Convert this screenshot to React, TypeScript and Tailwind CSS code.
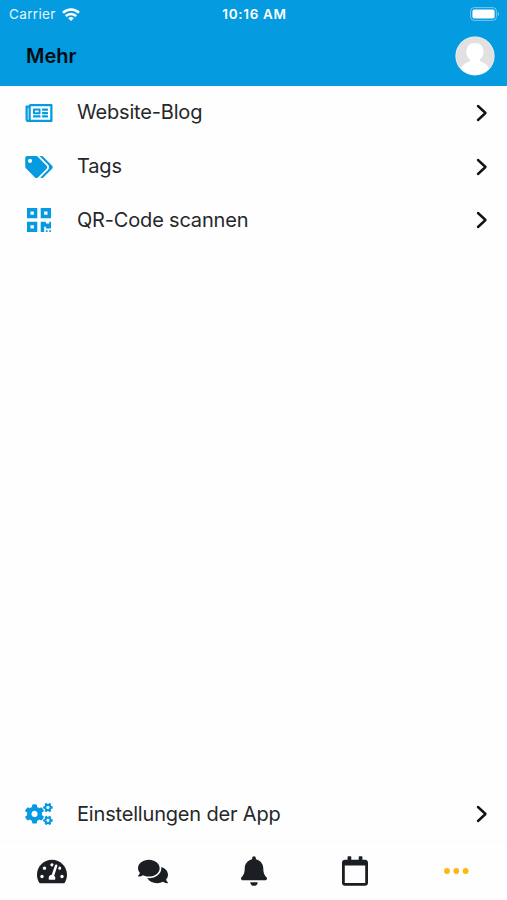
import type { ReactNode } from "react";
import {
    FaBell,
    FaCogs,
    FaComments,
    FaQrcode,
    FaRegCalendar,
    FaRegNewspaper,
    FaTachometerAlt,
    FaTags,
} from "react-icons/fa";

const menuItems = [
    { label: "Website-Blog", icon: <FaRegNewspaper className="w-7 h-6" /> },
    { label: "Tags", icon: <FaTags className="w-[28px] h-[22px]" /> },
    { label: "QR-Code scannen", icon: <FaQrcode className="w-6 h-[28px]" /> },
];

const WifiIcon = () => (
    <svg viewBox="0 0 18 13" className="w-[18px] h-[13px]" fill="none" stroke="#fff" strokeWidth="2.6">
        <path d="M1 4.8a11.4 11.4 0 0 1 16 0" />
        <path d="M3.800 8.100a7.400 7.400 0 0 1 10.400 0" />
        <path d="M9 13 6.200 10.300a4 4 0 0 1 5.600 0z" fill="#fff" stroke="none" />
    </svg>
);

const BatteryIcon = () => (
    <svg viewBox="0 0 30 14" className="w-[30px] h-[14px]">
        <rect x="0.6" y="0.6" width="25.8" height="12.8" rx="3.6" fill="none" stroke="#fff" strokeOpacity="0.45" />
        <rect x="2.4" y="2.4" width="22.2" height="9.2" rx="2" fill="#fff" />
        <path d="M27.8 4.8a2.6 2.6 0 0 1 0 4.4z" fill="#fff" fillOpacity="0.5" />
    </svg>
);

const Avatar = () => (
    <svg viewBox="0 0 40 40" className="w-10 h-10">
        <clipPath id="avatar-clip">
            <circle cx="20" cy="20" r="19" />
        </clipPath>
        <circle cx="20" cy="20" r="19.6" fill="#f4f4f4" />
        <g clipPath="url(#avatar-clip)">
            <rect width="40" height="40" fill="#e1e1e1" />
            <path
                d="M20 7c5.200 0 8.600 3.400 8.600 8.600 0 3.300-1.500 6.200-3.700 8v1.700c5 1.500 8.600 4.500 10 9.700V40H5v-5c1.400-5.200 5-8.200 10-9.700v-1.700c-2.200-1.800-3.700-4.700-3.700-8C11.300 10.400 14.800 7 20 7z"
                fill="#fff"
            />
        </g>
    </svg>
);

const Chevron = () => (
    <svg viewBox="0 0 12 18" className="w-3 h-[18px] text-[#111416]" fill="none">
        <path d="M2 2l7.5 7L2 16" stroke="currentColor" strokeWidth="2.4" strokeLinecap="round" strokeLinejoin="round" />
    </svg>
);

const MoreIcon = () => (
    <svg viewBox="0 0 25 6" className="w-[25px] h-1.5" fill="#fcb713">
        <circle cx="3" cy="3" r="2.9" />
        <circle cx="12.3" cy="3" r="2.9" />
        <circle cx="21.6" cy="3" r="2.9" />
    </svg>
);

const MenuRow = ({ icon, label }: { icon: ReactNode; label: string }) => (
    <button className="flex items-center w-full h-[53.7px] pl-[25px] pr-[19px] text-left">
        <span className="flex justify-center w-7 text-[#069be0]">{icon}</span>
        <span className="flex-1 ml-6 pb-px text-[20px] tracking-[-0.18px] text-[#25282b]">{label}</span>
        <Chevron />
    </button>
);

export default function App() {
    return (
        <div className="flex flex-col w-full h-[900px] bg-[#fefefe] font-['Inter','Liberation_Sans',sans-serif]">
            <header className="h-[86px] bg-[#049be0]">
                <div className="grid grid-cols-3 items-center h-7 pl-[9px] pr-[7px] text-white">
                    <div className="flex items-center gap-1.5 text-[13.5px] tracking-[0.35px] text-white/90">
                        <span>Carrier</span>
                        <WifiIcon />
                    </div>
                    <span className="text-center text-[13.5px] font-semibold tracking-[0.7px]">10:16 AM</span>
                    <div className="flex justify-end">
                        <BatteryIcon />
                    </div>
                </div>
                <div className="flex items-center justify-between h-14 pl-[26px] pr-3">
                    <h1 className="text-[20px] font-semibold text-[#020b12]">Mehr</h1>
                    <Avatar />
                </div>
            </header>

            <main className="flex flex-col flex-1">
                {menuItems.map((item) => (
                    <MenuRow key={item.label} icon={item.icon} label={item.label} />
                ))}
                <div className="mt-auto">
                    <MenuRow icon={<FaCogs className="w-7 h-[22px]" />} label="Einstellungen der App" />
                </div>
            </main>

            <nav className="grid grid-cols-5 items-center h-[59px] pl-px border-t border-[#fafafa] bg-[#fefefe] text-[#1b1f23] justify-items-center">
                <FaTachometerAlt className="w-[30px] h-[27px]" />
                <FaComments className="w-[30px] h-[27px]" />
                <FaBell className="w-[26px] h-[30px]" />
                <FaRegCalendar className="w-[26px] h-[30px]" />
                <MoreIcon />
            </nav>
        </div>
    );
}
